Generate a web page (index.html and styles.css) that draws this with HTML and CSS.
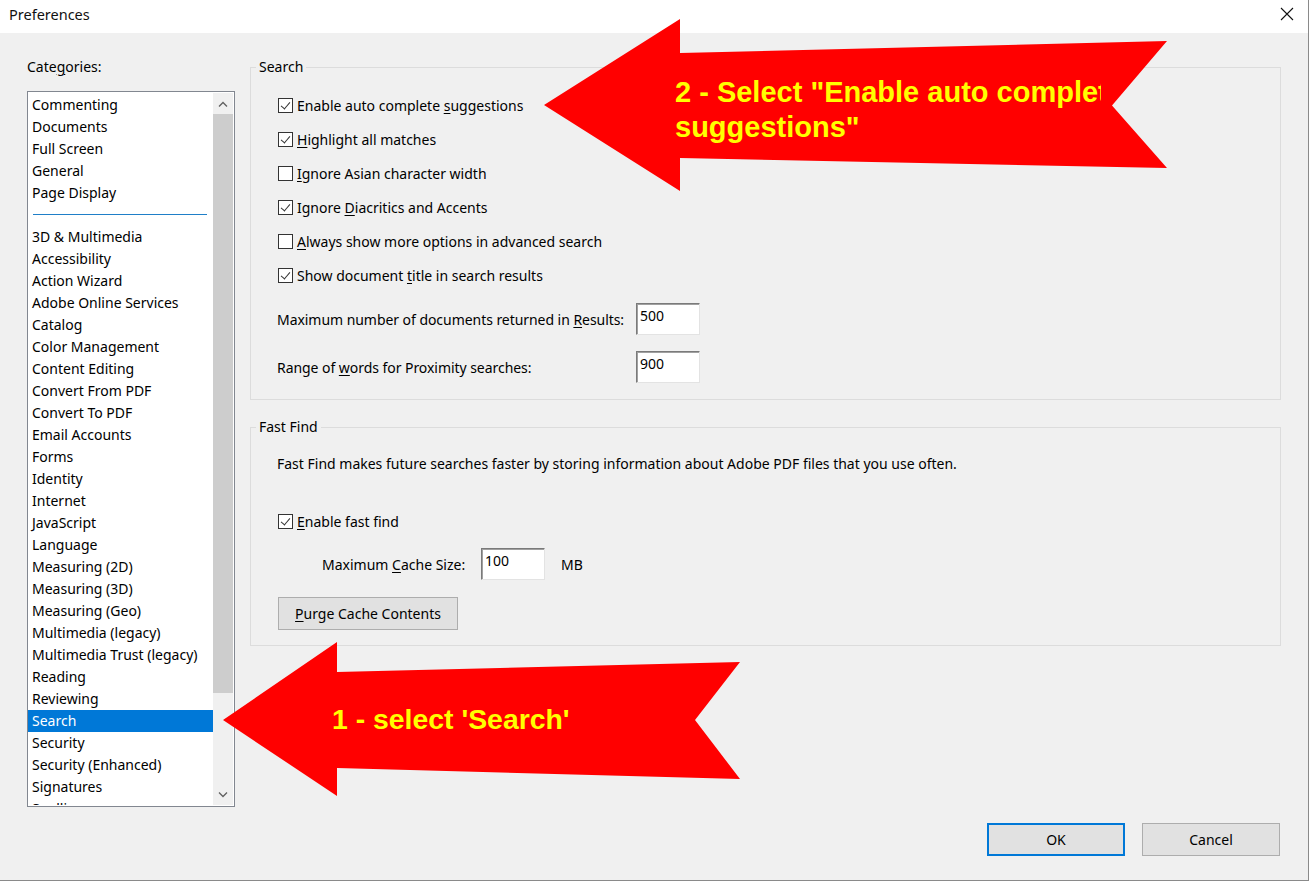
FILE: index.html
```html
<!DOCTYPE html>
<html lang="en">
<head>
<meta charset="utf-8">
<title>Preferences</title>
<link rel="stylesheet" href="styles.css">
</head>
<body>
<div class="window">
  <div class="titlebar">
    <span class="title">Preferences</span>
    <svg class="close" width="14" height="14" viewBox="0 0 14 14"><path d="M1 1L13 13M13 1L1 13" stroke="#111" stroke-width="1.1" fill="none"/></svg>
  </div>

  <div class="main">
    <div class="left">
      <div class="cat-label">Cate<u>g</u>ories:</div>
      <div class="listbox">
        <ul class="items">
          <li>Commenting</li>
          <li>Documents</li>
          <li>Full Screen</li>
          <li>General</li>
          <li>Page Display</li>
          <li class="sep"><span></span></li>
          <li>3D &amp; Multimedia</li>
          <li>Accessibility</li>
          <li>Action Wizard</li>
          <li>Adobe Online Services</li>
          <li>Catalog</li>
          <li>Color Management</li>
          <li>Content Editing</li>
          <li>Convert From PDF</li>
          <li>Convert To PDF</li>
          <li>Email Accounts</li>
          <li>Forms</li>
          <li>Identity</li>
          <li>Internet</li>
          <li>JavaScript</li>
          <li>Language</li>
          <li>Measuring (2D)</li>
          <li>Measuring (3D)</li>
          <li>Measuring (Geo)</li>
          <li>Multimedia (legacy)</li>
          <li>Multimedia Trust (legacy)</li>
          <li>Reading</li>
          <li>Reviewing</li>
          <li class="selected">Search</li>
          <li>Security</li>
          <li>Security (Enhanced)</li>
          <li>Signatures</li>
          <li>Spelling</li>
        </ul>
        <div class="scrollbar">
          <div class="sb-btn"><svg width="10" height="6" viewBox="0 0 10 6"><path d="M1 5.5L5 1.5L9 5.5" stroke="#606060" stroke-width="1.3" fill="none"/></svg></div>
          <div class="sb-track"><div class="sb-thumb"></div></div>
          <div class="sb-btn"><svg width="10" height="6" viewBox="0 0 10 6"><path d="M1 0.5L5 4.5L9 0.5" stroke="#606060" stroke-width="1.3" fill="none"/></svg></div>
        </div>
      </div>
    </div>

    <div class="right">
      <fieldset class="group">
        <legend>Search</legend>
        <div class="group-body search-body">
          <div class="check-row"><span class="cb checked"></span><span>Enable auto complete <u>s</u>uggestions</span></div>
          <div class="check-row"><span class="cb checked"></span><span><u>H</u>ighlight all matches</span></div>
          <div class="check-row"><span class="cb"></span><span><u>I</u>gnore Asian character width</span></div>
          <div class="check-row"><span class="cb checked"></span><span>Ignore <u>D</u>iacritics and Accents</span></div>
          <div class="check-row"><span class="cb"></span><span><u>A</u>lways show more options in advanced search</span></div>
          <div class="check-row"><span class="cb checked"></span><span>Show document <u>t</u>itle in search results</span></div>
          <div class="field-grid">
            <span>Maximum number of documents returned in <u>R</u>esults:</span>
            <span class="textbox">500</span>
            <span>Range of <u>w</u>ords for Proximity searches:</span>
            <span class="textbox">900</span>
          </div>
        </div>
      </fieldset>

      <fieldset class="group fastfind">
        <legend>Fast Find</legend>
        <div class="group-body ff-body">
          <div class="desc">Fast Find makes future searches faster by storing information about Adobe PDF files that you use often.</div>
          <div class="check-row ff-check"><span class="cb checked"></span><span><u>E</u>nable fast find</span></div>
          <div class="cache-row">
            <span class="cache-label">Maximum <u>C</u>ache Size:</span>
            <span class="textbox">100</span>
            <span class="unit">MB</span>
          </div>
          <div class="btn-row"><span class="btn purge"><u>P</u>urge Cache Contents</span></div>
        </div>
      </fieldset>
    </div>
  </div>

  <div class="footer">
    <span class="btn dlg default">OK</span>
    <span class="btn dlg">Cancel</span>
  </div>

  <svg class="arrow" width="1309" height="881" viewBox="0 0 1309 881">
    <polygon points="544,105 680,19 680,53 1167,41 1112,105.5 1167,168 680,158 680,191" fill="#ff0000"/>
  </svg>
  <div class="callout callout-two"><div class="callout-clip">2 - Select "Enable auto complete<br>suggestions"</div></div>

  <svg class="arrow" width="1309" height="881" viewBox="0 0 1309 881">
    <polygon points="223,720 337,642 337,672 740,662 695,720 740,779 337,768 337,796" fill="#ff0000"/>
  </svg>
  <div class="callout callout-one">1 - select 'Search'</div>
</div>
</body>
</html>
```

FILE: styles.css
```css
* { box-sizing: border-box; }

html, body {
  margin: 0;
  padding: 0;
}

body {
  font-family: "Noto Sans", "Open Sans", sans-serif;
  font-size: 14px;
  color: #000;
  background: #f0f0f0;
}

u { text-decoration: underline; text-underline-offset: 2px; text-decoration-thickness: 1px; }

.window {
  position: relative;
  width: 1309px;
  height: 881px;
  background: #f0f0f0;
  border-right: 1px solid #8a8a8a;
  border-bottom: 1px solid #8a8a8a;
  overflow: hidden;
}

.titlebar {
  height: 33px;
  background: #fff;
  display: flex;
  align-items: center;
  justify-content: space-between;
  padding: 0 14px 5px 9px;
}

.title {
  font-size: 14.5px;
  color: #111;
}

.close { display: block; }

.main {
  display: flex;
  gap: 15px;
  padding: 24px 27px 0 27px;
}

.left {
  width: 208px;
  flex: none;
}

.cat-label {
  line-height: 20px;
  height: 20px;
  margin-bottom: 14px;
}

.listbox {
  height: 716px;
  border: 1px solid #828790;
  background: #fff;
  display: flex;
  padding: 1px 1px 1px 0;
}

.items {
  list-style: none;
  margin: 0;
  padding: 1px 0 0 0;
  flex: 1;
  overflow: hidden;
}

.items li {
  height: 22px;
  line-height: 22px;
  padding-left: 4px;
  white-space: nowrap;
}

.items li.sep {
  padding: 10px 4px 0 5px;
}

.items li.sep span {
  display: block;
  height: 1px;
  width: 174px;
  background: #1f7fc8;
}

.items li.selected {
  background: #0078d7;
  color: #fff;
}

.scrollbar {
  width: 20px;
  flex: none;
  display: flex;
  flex-direction: column;
  background: #f0f0f0;
}

.sb-btn {
  height: 21px;
  display: flex;
  align-items: center;
  justify-content: center;
}

.sb-track {
  flex: 1;
}

.sb-thumb {
  height: 579px;
  background: #cdcdcd;
}

.right {
  width: 1031px;
  flex: none;
}

.group {
  margin: 0;
  padding: 0;
  border: 1px solid #dcdcdc;
  min-width: 0;
}

.group legend {
  margin-left: 5px;
  padding: 0 3px;
  line-height: 20px;
  height: 20px;
}

.group-body {
  padding-left: 26px;
}

.search-body {
  padding-top: 11px;
  padding-bottom: 16px;
}

.check-row {
  height: 34px;
  display: flex;
  align-items: center;
  gap: 4px;
}

.cb {
  width: 15px;
  height: 15px;
  border: 1px solid #333;
  background: #fff;
  flex: none;
  position: relative;
  margin-left: 1px;
}

.cb.checked::after {
  content: "";
  position: absolute;
  left: 4px;
  top: 1px;
  width: 4px;
  height: 8px;
  border-right: 1.2px solid #333;
  border-bottom: 1.2px solid #333;
  transform: rotate(40deg);
}

.field-grid {
  display: grid;
  grid-template-columns: 359px 64px;
  grid-auto-rows: 32px;
  row-gap: 16px;
  align-items: center;
  margin-top: 11px;
  letter-spacing: -0.05px;
}

.textbox {
  display: block;
  width: 64px;
  height: 32px;
  background: #fff;
  border: 1px solid;
  border-color: #7a7a7a #e3e3e3 #e3e3e3 #7a7a7a;
  box-shadow: inset 1px 1px 0 #a0a0a0;
  padding: 2px 3px;
  line-height: 20px;
  letter-spacing: 0;
}

.fastfind {
  margin-top: 17px;
}

.ff-body {
  padding-top: 17px;
  padding-bottom: 15px;
}

.desc {
  line-height: 20px;
}

.ff-check {
  margin-top: 30px;
}

.cache-row {
  display: flex;
  align-items: center;
  height: 32px;
  margin-top: 10px;
  padding-left: 45px;
}

.cache-label {
  width: 159px;
}

.unit {
  margin-left: 16px;
}

.btn-row {
  margin-top: 17px;
  display: flex;
}

.btn {
  display: flex;
  align-items: center;
  justify-content: center;
  height: 33px;
  background: #e1e1e1;
  border: 1px solid #adadad;
}

.purge {
  width: 180px;
  margin-left: 1px;
}

.footer {
  display: flex;
  justify-content: flex-end;
  gap: 17px;
  padding: 16px 28px 0 0;
}

.dlg {
  width: 138px;
}

.dlg.default {
  border: 2px solid #0078d7;
}

/* Annotation overlays */
.arrow {
  position: absolute;
  left: 0;
  top: 0;
  pointer-events: none;
}

.callout {
  position: absolute;
  font-family: "Liberation Sans", Arial, sans-serif;
  font-weight: bold;
  color: #ffff00;
  white-space: nowrap;
}

.callout-two {
  left: 675px;
  top: 75px;
  font-size: 29px;
  line-height: 35px;
}

.callout-clip {
  width: 426px;
  overflow: hidden;
}

.callout-one {
  left: 332px;
  top: 702px;
  font-size: 28.4px;
  line-height: 34px;
}
```
